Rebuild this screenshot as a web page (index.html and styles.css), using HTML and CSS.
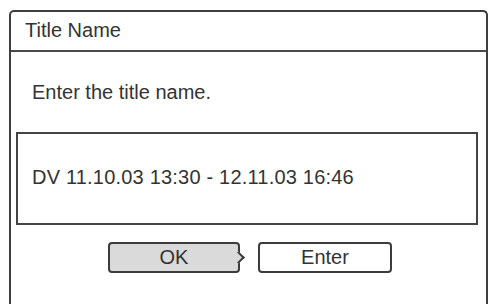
FILE: index.html
```html
<!DOCTYPE html>
<html>
<head>
<meta charset="utf-8">
<link rel="stylesheet" href="styles.css">
</head>
<body>
<div class="dialog">
  <div class="header">Title Name</div>
  <div class="prompt">Enter the title name.</div>
  <div class="textbox">DV 11.10.03 13:30 - 12.11.03 16:46</div>
  <div class="buttons">
    <div class="btn btn-ok">OK</div>
    <div class="btn btn-enter">Enter</div>
  </div>
</div>
</body>
</html>
```
FILE: styles.css
```css
html, body {
  margin: 0;
  background: #ffffff;
}
body {
  padding: 10px 0 0 9px;
  font-family: "Liberation Sans", Arial, sans-serif;
  font-size: 20px;
  color: #333333;
  overflow: hidden;
  height: 304px;
  box-sizing: border-box;
}
.dialog {
  width: 479px;
  height: 294px;
  box-sizing: border-box;
  border: 2px solid #3e3e3e;
  border-bottom: 0;
  border-radius: 5px 5px 0 0;
}
.header {
  padding: 7px 0 8px 14px;
  line-height: 23px;
  border-bottom: 2px solid #4a4a4a;
}
.prompt {
  padding: 29px 0 0 21px;
  line-height: 23px;
}
.textbox {
  margin: 28px 8px 0 5px;
  height: 93px;
  box-sizing: border-box;
  border: 2px solid #444444;
  padding: 32px 0 0 14px;
  line-height: 23px;
  letter-spacing: 0.2px;
}
.buttons {
  display: flex;
  gap: 18px;
  margin: 17px 0 0 97px;
}
.btn {
  position: relative;
  height: 31px;
  box-sizing: border-box;
  border: 2px solid #3c3c3c;
  border-radius: 4px;
  text-align: center;
  line-height: 27px;
}
.btn-ok {
  width: 132px;
  background: #dadada;
}
.btn-ok::after {
  content: "";
  position: absolute;
  right: -5px;
  top: 9px;
  width: 7px;
  height: 7px;
  background: #dadada;
  border-top: 2px solid #3c3c3c;
  border-right: 2px solid #3c3c3c;
  transform: rotate(45deg);
}
.btn-enter {
  width: 134px;
  background: #ffffff;
}
```
